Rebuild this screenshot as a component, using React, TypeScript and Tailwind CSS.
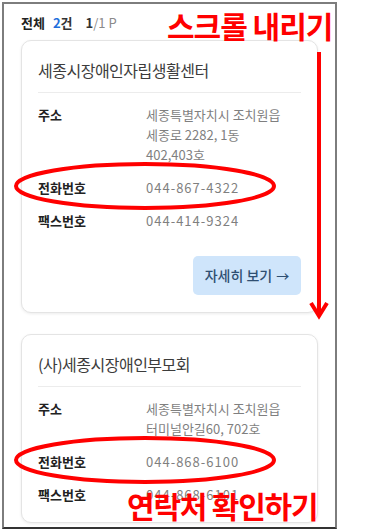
import React from 'react';

interface Org {
    name: string;
    address: string[];
    tel: string;
    fax: string;
}

const orgs: Org[] = [
    {
        name: '세종시장애인자립생활센터',
        address: ['세종특별자치시 조치원읍', '세종로 2282, 1동', '402,403호'],
        tel: '044-867-4322',
        fax: '044-414-9324',
    },
    {
        name: '(사)세종시장애인부모회',
        address: ['세종특별자치시 조치원읍', '터미널안길60, 702호'],
        tel: '044-868-6100',
        fax: '044-868-6101',
    },
];

const font = { fontFamily: '"Noto Sans CJK KR", "Noto Sans", sans-serif' };

function InfoRow({ label, children }: { label: string; children: React.ReactNode }) {
    return (
        <div className="flex text-[13px] leading-[20px]">
            <div className="w-[108px] shrink-0 font-bold text-[#222]">{label}</div>
            <div className="text-[#7f7f7f]">{children}</div>
        </div>
    );
}

function OrgCard({ org, showButton }: { org: Org; showButton: boolean }) {
    return (
        <div className="rounded-[10px] border border-[#e4e4e4] bg-white px-4 pt-[17px] pb-[17px] shadow-[0_1px_3px_rgba(0,0,0,0.08)]">
            {/* Title */}
            <h2 className="text-[16px] leading-[24px] tracking-[-0.5px] text-[#3c3c3c]">{org.name}</h2>
            <div className="mt-[10px] h-px bg-[#ececec]" />

            {/* Info */}
            <div className="mt-[12px] flex flex-col gap-[13px]">
                <InfoRow label="주소">
                    {org.address.map((line, i) => (
                        <div key={i}>{line}</div>
                    ))}
                </InfoRow>
                <InfoRow label="전화번호">
                    <span className="tracking-[1px]">{org.tel}</span>
                </InfoRow>
                <InfoRow label="팩스번호">
                    <span className="tracking-[1px]">{org.fax}</span>
                </InfoRow>
            </div>

            {showButton && (
                <div className="mt-[25px] flex justify-end">
                    <button className="flex h-[39px] w-[108px] items-center justify-center gap-1 rounded-[5px] bg-[#cfe5fb] text-[14px] font-medium text-[#2f4f72]">
                        자세히 보기
                        <span className="text-[13px]">→</span>
                    </button>
                </div>
            )}
        </div>
    );
}

export default function App() {
    return (
        <div className="relative h-[530px] w-[365px] overflow-hidden bg-white" style={font}>
            {/* Phone screenshot frame */}
            <div className="ml-[2px] mt-[2px] h-[527px] w-[335px] overflow-hidden border-2 border-[#7d7d7d] border-b-[#333]">
                <div className="px-[17px] pt-[10px]">
                    {/* Summary */}
                    <div className="flex items-center text-[13px] leading-[18px]">
                        <span className="font-bold text-[#222]">전체</span>
                        <span className="ml-[8px] font-bold text-[#1f6fdc]">2</span>
                        <span className="font-bold text-[#333]">건</span>
                        <span className="ml-[13px] font-bold text-[#333]">1</span>
                        <span className="text-[#8a8a8a]">/1 P</span>
                    </div>

                    <div className="mt-[8px] flex flex-col gap-[21px]">
                        {orgs.map((org, i) => (
                            <OrgCard key={org.name} org={org} showButton={i === 0} />
                        ))}
                    </div>
                </div>
            </div>

            {/* Red annotations */}
            <svg className="pointer-events-none absolute inset-0" width="365" height="530" viewBox="0 0 365 530">
                <ellipse cx="145" cy="186" rx="129" ry="22" fill="none" stroke="#ff0000" strokeWidth="4" />
                <ellipse cx="145" cy="460" rx="129" ry="22" fill="none" stroke="#ff0000" strokeWidth="4" />
                <line x1="319" y1="52" x2="319" y2="316" stroke="#ff0000" strokeWidth="4" />
                <polyline points="311,303 319,316 327,303" fill="none" stroke="#ff0000" strokeWidth="4" />
            </svg>
            <span className="pointer-events-none absolute left-[167px] top-[6px] whitespace-nowrap text-[30px] font-bold leading-[38px] tracking-[-1px] text-[#ff0000]">
                스크롤 내리기
            </span>
            <span className="pointer-events-none absolute left-[127px] top-[485px] whitespace-nowrap text-[30px] font-bold leading-[40px] tracking-[-1.2px] text-[#ff0000]">
                연락처 확인하기
            </span>
        </div>
    );
}
